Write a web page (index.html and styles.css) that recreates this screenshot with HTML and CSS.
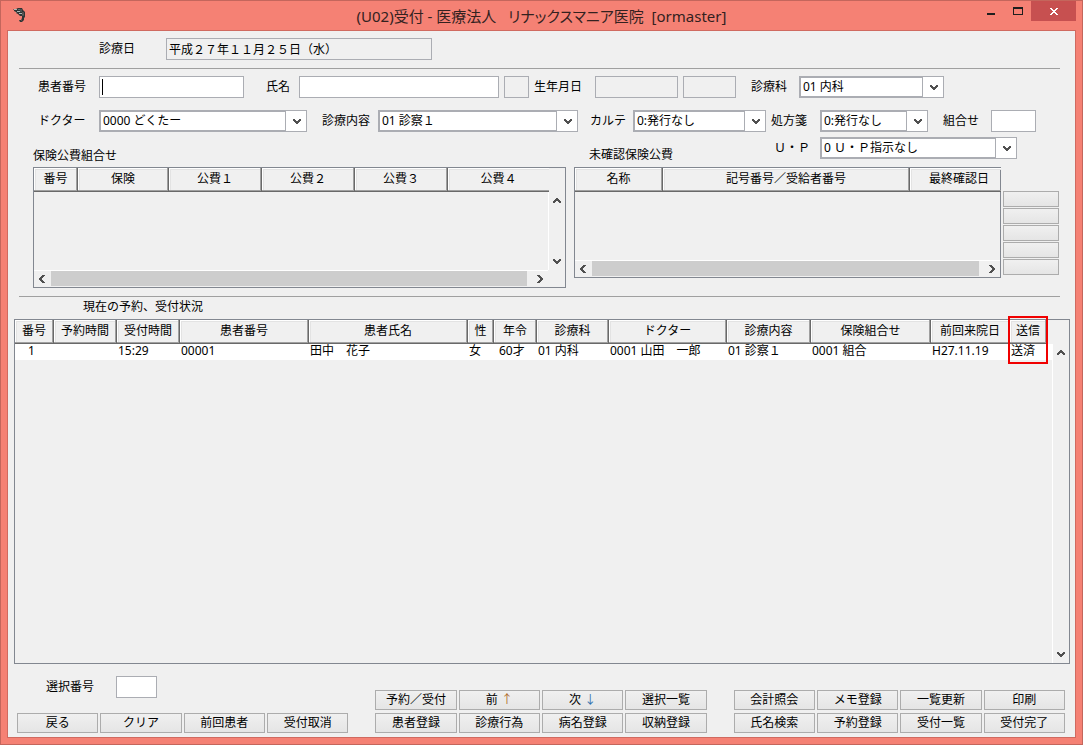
FILE: index.html
```html
<!DOCTYPE html>
<html lang="ja">
<head>
<meta charset="utf-8">
<title>(U02)受付</title>
<link rel="stylesheet" href="styles.css">
</head>
<body>
<svg class="defs" width="0" height="0" aria-hidden="true">
  <symbol id="down" viewBox="0 0 8 6"><path d="M0 0h2v1h1v1h2v-1h1v-1h2v2h-1v1h-1v1h-1v1h-2v-1h-1v-1h-1v-1h-1z"/></symbol>
  <symbol id="up" viewBox="0 0 8 6"><path d="M3 0h2v1h1v1h1v1h1v2h-2v-1h-1v-1h-2v1h-1v1h-2v-2h1v-1h1v-1h1z"/></symbol>
  <symbol id="left" viewBox="0 0 6 8"><path d="M3 0h3v1h-1v1h-1v1h-1v2h1v1h1v1h1v1h-3v-1h-1v-1h-1v-1h-1v-2h1v-1h1v-1h1z"/></symbol>
  <symbol id="right" viewBox="0 0 6 8"><path d="M0 0h3v1h1v1h1v1h1v2h-1v1h-1v1h-1v1h-3v-1h1v-1h1v-1h1v-2h-1v-1h-1v-1h-1z"/></symbol>
</svg>
<div class="window">
  <header class="titlebar">
    <svg class="app-icon" viewBox="0 0 14 16" aria-hidden="true">
      <path d="M0 2h3l2-1h4l1 2 1 1 1 1v5l-1 1v2l-1 1-1 1h-2l-1-2 2 0 1-2 0-2-2 0-2-2-2-1v-1l-2-1v-1l-1-1z" fill="#303434"/>
      <path d="M1 2.500h3M4 4.500h3M6 6.500h3" stroke="#a9b8b6" fill="none"/>
      <path d="M5 2.500h2M8 2v3M9 8h2M3 5.500h1" stroke="#5f6d6c" fill="none"/>
      <path d="M10 5v3M8 13h1" stroke="#7a6a66" fill="none"/>
    </svg>
    <h1 class="title">(U02)受付 - 医療法人&nbsp;&nbsp; <span class="kana">リナックスマニア</span>医院&nbsp; [ormaster]</h1>
    <div class="window-buttons">
      <button type="button" class="win-btn minimize" aria-label="最小化"><svg width="8" height="2" viewBox="0 0 8 2"><path d="M0 0h8v2h-8z" fill="#1e1e1e"/></svg></button>
      <button type="button" class="win-btn" aria-label="最大化"><svg width="10" height="8" viewBox="0 0 10 8"><path d="M0 0h10v8h-10zM1 2v5h8v-5z" fill="#1e1e1e" fill-rule="evenodd"/></svg></button>
      <button type="button" class="win-btn close" aria-label="閉じる"><svg width="8" height="7" viewBox="0 0 8 7"><path d="M0 0h2v1h1v1h2v-1h1v-1h2v1h-1v1h-1v1h-1v1h1v1h1v1h1v1h-2v-1h-1v-1h-2v1h-1v1h-2v-1h1v-1h1v-1h1v-1h-1v-1h-1v-1h-1z" fill="#fff"/></svg></button>
    </div>
  </header>

  <main class="content">
    <div class="form-row date-row">
      <label for="date">診療日</label>
      <input id="date" class="field" value="平成２７年１１月２５日（水）" readonly>
    </div>
    <hr class="rule">
    <div class="form-row patient-row">
      <label for="pid">患者番号</label>
      <span class="caret-box"><input id="pid" class="field"></span>
      <label for="pname" class="pad-l">氏名</label>
      <input id="pname" class="field">
      <input class="field" aria-label="性別" readonly>
      <label for="birth">生年月日</label>
      <input id="birth" class="field" readonly>
      <input class="field" aria-label="年齢" readonly>
      <label for="dept" class="pad-m">診療科</label>
      <span class="combo"><select id="dept"><option>01 内科</option></select><svg><use href="#down"/></svg></span>
    </div>
    <div class="form-row doctor-row">
      <label for="doctor">ドクター</label>
      <span class="combo"><select id="doctor"><option>0000 どくたー</option></select><svg><use href="#down"/></svg></span>
      <label for="kind" class="pad-m">診療内容</label>
      <span class="combo"><select id="kind"><option>01 診察１</option></select><svg><use href="#down"/></svg></span>
      <label for="karte" class="pad-s">カルテ</label>
      <span class="combo"><select id="karte"><option>0:発行なし</option></select><svg><use href="#down"/></svg></span>
      <label for="rx">処方箋</label>
      <span class="combo"><select id="rx"><option>0:発行なし</option></select><svg><use href="#down"/></svg></span>
      <label for="combi" class="pad-m">組合せ</label>
      <input id="combi" class="field">
    </div>

    <div class="panels">
      <section class="panel">
        <div class="panel-head"><h2>保険公費組合せ</h2></div>
        <div class="list ins-list">
          <table>
            <colgroup><col class="w44"><col class="w91"><col class="w93"><col class="w93"><col class="w93"><col class="w101"></colgroup>
            <thead><tr><th>番号</th><th>保険</th><th>公費１</th><th>公費２</th><th>公費３</th><th class="cut">公費４</th></tr></thead>
          </table>
          <div class="vbar"><svg><use href="#up"/></svg><svg><use href="#down"/></svg></div>
          <div class="hbar"><svg><use href="#left"/></svg><span class="thumb"></span><svg><use href="#right"/></svg></div>
        </div>
      </section>
      <section class="panel">
        <div class="panel-head up-head">
          <h2>未確認保険公費</h2>
          <label for="up-sel">Ｕ・Ｐ</label>
          <span class="combo"><select id="up-sel"><option>0 Ｕ・Ｐ指示なし</option></select><svg><use href="#down"/></svg></span>
        </div>
        <div class="unconfirmed">
          <div class="list unc-list">
            <table>
              <colgroup><col class="w88"><col class="w247"><col class="w91"></colgroup>
              <thead><tr><th>名称</th><th>記号番号／受給者番号</th><th class="cut last">最終確認日</th></tr></thead>
            </table>
            <div class="hbar"><svg><use href="#left"/></svg><span class="thumb"></span><svg><use href="#right"/></svg></div>
          </div>
          <div class="side-buttons">
            <button type="button" class="btn" aria-label="1"></button>
            <button type="button" class="btn" aria-label="2"></button>
            <button type="button" class="btn" aria-label="3"></button>
            <button type="button" class="btn" aria-label="4"></button>
            <button type="button" class="btn" aria-label="5"></button>
          </div>
        </div>
      </section>
    </div>

    <hr class="rule">
    <h2 class="list-title">現在の予約、受付状況</h2>
    <div class="list main-list">
      <table>
        <colgroup><col class="w39"><col class="w63"><col class="w63"><col class="w129"><col class="w159"><col class="w26"><col class="w43"><col class="w72"><col class="w118"><col class="w84"><col class="w120"><col class="w79"><col class="w37"><col class="w5"></colgroup>
        <thead><tr><th>番号</th><th>予約時間</th><th>受付時間</th><th>患者番号</th><th>患者氏名</th><th>性</th><th>年令</th><th>診療科</th><th>ドクター</th><th>診療内容</th><th>保険組合せ</th><th>前回来院日</th><th class="marked">送信</th><td></td></tr></thead>
        <tbody><tr><td class="num">1</td><td></td><td>15:29</td><td>00001</td><td>田中　花子</td><td>女</td><td class="age">60才</td><td>01 内科</td><td>0001 山田　一郎</td><td>01 診察１</td><td>0001 組合</td><td>H27.11.19</td><td>送済</td><td></td></tr></tbody>
      </table>
      <div class="vbar"><svg><use href="#up"/></svg><svg><use href="#down"/></svg></div>
    </div>

    <footer class="footer">
      <div class="left-group">
        <div class="select-no"><label for="no">選択番号</label><input id="no" class="field"></div>
        <div class="buttons">
          <button type="button" class="btn">戻る</button><button type="button" class="btn">クリア</button><button type="button" class="btn">前回患者</button><button type="button" class="btn">受付取消</button>
        </div>
      </div>
      <div class="buttons">
        <button type="button" class="btn">予約／受付</button><button type="button" class="btn">前 <span class="arrow-up">↑</span></button><button type="button" class="btn">次 <span class="arrow-down">↓</span></button><button type="button" class="btn">選択一覧</button>
        <button type="button" class="btn">患者登録</button><button type="button" class="btn">診療行為</button><button type="button" class="btn">病名登録</button><button type="button" class="btn">収納登録</button>
      </div>
      <div class="buttons">
        <button type="button" class="btn">会計照会</button><button type="button" class="btn">メモ登録</button><button type="button" class="btn">一覧更新</button><button type="button" class="btn">印刷</button>
        <button type="button" class="btn">氏名検索</button><button type="button" class="btn">予約登録</button><button type="button" class="btn">受付一覧</button><button type="button" class="btn">受付完了</button>
      </div>
    </footer>
  </main>
</div>
</body>
</html>
```
FILE: styles.css
```css
*, *::before, *::after { box-sizing: border-box; }

body {
  margin: 0;
  color: #000;
  font: 12px/16px "Noto Sans", "Noto Sans CJK JP", sans-serif;
}

input, select, button { font: inherit; color: inherit; }
h1, h2 { margin: 0; font-weight: 400; font-size: 12px; }
.defs { position: absolute; }

.window {
  display: flex;
  flex-direction: column;
  min-height: 100vh;
  padding: 0 6px 6px;
  border: 1px solid #c4665c;
  background: #f58174;
}

/* Title bar */
.titlebar {
  display: grid;
  grid-template-columns: 1fr auto 1fr;
  height: 29px;
}
.app-icon { width: 14px; height: 16px; margin: 6px 0 0 6px; }
.title { font-size: 15px; line-height: 31px; color: #33211f; white-space: nowrap; }
.kana { font-feature-settings: "palt"; }
.window-buttons { display: flex; justify-content: flex-end; align-items: flex-start; }
.win-btn {
  display: flex;
  align-items: center;
  justify-content: center;
  width: 27px;
  height: 20px;
  padding: 0;
  border: 0;
  background: none;
}
.win-btn.minimize { padding-top: 6px; }
.win-btn.close { width: 45px; padding-top: 1px; background: #c75050; }

.content {
  flex: 1;
  display: flex;
  flex-direction: column;
  border: 1px solid #d06a60;
  background: #f0f0f0;
}

/* Form */
.form-row {
  display: grid;
  column-gap: 5px;
  align-items: center;
  padding-left: 30px;
  white-space: nowrap;
}
.date-row {
  grid-template-columns: 62px 266fr 638fr;
  padding: 7px 0 0 91px;
}
.patient-row {
  grid-template-columns: 56px 145fr 45px 200fr 25fr 56px 83fr 53fr 53px 145fr;
  padding-right: 131px;
  margin-top: 7px;
}
.doctor-row {
  grid-template-columns: 56px 208fr 61px 200fr 45px 133fr 44px 108fr 53px 45fr;
  padding-right: 39px;
  margin-top: 12px;
}
.pad-s { padding-left: 7px; }
.pad-m { padding-left: 10px; }
.pad-l { padding-left: 17px; }

.field {
  width: 100%;
  min-width: 0;
  height: 22px;
  padding: 0 2px;
  border: 1px solid #abadb3;
  border-radius: 0;
  background: #fff;
}
.field:read-only { background: #f0f0f0; }

.caret-box { position: relative; display: flex; }
.caret-box::after {
  content: "";
  position: absolute;
  left: 3px;
  top: 3px;
  width: 1px;
  height: 16px;
  background: #000;
}

.combo {
  position: relative;
  display: flex;
  height: 22px;
  border: 1px solid #abadb3;
  background: #fff;
}
.combo::before {
  content: "";
  position: absolute;
  inset: 0 20px 0 0;
  border: 1px solid #abadb3;
  pointer-events: none;
}
.combo select {
  appearance: none;
  width: 100%;
  padding: 0 22px 0 3px;
  border: 0;
  border-radius: 0;
  background: none;
}
.combo svg {
  position: absolute;
  right: 5px;
  top: 8px;
  width: 8px;
  height: 6px;
  fill: #505050;
  pointer-events: none;
}

.rule {
  flex: none;
  height: 1px;
  margin: 8px 15px 0 11px;
  border: 0;
  background: #a0a0a0;
}

/* Insurance panels */
.panels {
  display: grid;
  grid-template-columns: 533fr 485fr;
  gap: 8px;
  align-items: start;
  padding: 5px 16px 0 25px;
}
.panel-head { display: flex; align-items: flex-end; height: 30px; padding-bottom: 3px; }
.up-head {
  display: grid;
  grid-template-columns: 185fr 46px 197fr;
  align-items: center;
  padding: 0 42px 8px 15px;
}
.up-head h2 { align-self: end; margin-bottom: -4px; }

.list {
  display: grid;
  grid-template-columns: minmax(0, 1fr) auto;
  grid-template-rows: 1fr auto;
  border: 1px solid #828790;
}
.ins-list { height: 121px; }
.unc-list { height: 111px; }
.list table {
  width: 100%;
  align-self: start;
  table-layout: fixed;
  border-collapse: separate;
  border-spacing: 0;
  white-space: nowrap;
}
.list th {
  height: 24px;
  padding: 0 0 1px;
  border: solid #696969;
  border-width: 0 1px 1px 0;
  box-shadow: inset -1px -1px #a0a0a0, inset 1px 1px #fff, inset 2px 2px #e3e3e3;
  font-weight: 400;
}
.list th.cut { border-right: 0; box-shadow: inset 0 -1px #a0a0a0, inset 1px 1px #fff, inset 2px 2px #e3e3e3; }
.list th.last { padding-left: 7px; }

.vbar {
  display: flex;
  flex-direction: column;
  justify-content: space-between;
  align-items: center;
  width: 17px;
  margin-top: 24px;
  padding: 6px 1px 5px 0;
  border-left: 1px solid #fff;
}
.vbar svg { width: 8px; height: 6px; fill: #505050; }
.hbar {
  grid-column: 1;
  display: flex;
  align-items: center;
  height: 17px;
  padding: 0 5px;
  border-top: 1px solid #fff;
}
.hbar svg { flex: none; width: 6px; height: 8px; fill: #505050; }
.hbar .thumb { flex: 1; height: 15px; margin: 0 10px 1px 6px; background: #cdcdcd; }

.unconfirmed { display: grid; grid-template-columns: 427fr 56fr; gap: 2px; }
.side-buttons { display: grid; gap: 1px; align-content: start; padding-top: 24px; }
.side-buttons .btn { height: 16px; }

.btn {
  width: 100%;
  min-width: 0;
  height: 20px;
  padding: 0 0 1px;
  border: 1px solid #acacac;
  border-radius: 0;
  background: linear-gradient(#f0f0f0, #e5e5e5);
  line-height: 16px;
  white-space: nowrap;
}

/* Reception list */
.list-title { padding: 2px 0 4px 75px; }
.main-list { flex: 1; margin: 0 5px 0 6px; }
.main-list tbody td {
  height: 16px;
  padding: 0 1px 2px;
  background: #fff;
  line-height: 14px;
}
.main-list tbody .num { padding-left: 13px; }
.main-list tbody .age { padding-left: 5px; }
.marked { position: relative; }
.marked::after {
  content: "";
  position: absolute;
  inset: -4px -2px auto -2px;
  height: 48px;
  border: 2px solid #f00000;
}

.w5 { width: 5px; }
.w26 { width: 26px; }
.w37 { width: 37px; }
.w39 { width: 39px; }
.w43 { width: 43px; }
.w44 { width: 44px; }
.w63 { width: 63px; }
.w72 { width: 72px; }
.w79 { width: 79px; }
.w84 { width: 84px; }
.w88 { width: 88px; }
.w91 { width: 91px; }
.w93 { width: 93px; }
.w101 { width: 101px; }
.w118 { width: 118px; }
.w120 { width: 120px; }
.w129 { width: 129px; }
.w159 { width: 159px; }
.w247 { width: 247px; }

/* Footer */
.footer {
  display: grid;
  grid-template-columns: repeat(3, 1fr);
  column-gap: 27px;
  align-items: end;
  padding: 12px 10px 4px 9px;
}
.buttons { display: grid; grid-template-columns: repeat(4, 1fr); gap: 3px 2px; }
.select-no {
  display: grid;
  grid-template-columns: 70px 41px;
  align-items: center;
  margin-bottom: 15px;
  padding-left: 29px;
}
.arrow-up { color: #b06a2c; }
.arrow-down { color: #2f6fae; }
```
